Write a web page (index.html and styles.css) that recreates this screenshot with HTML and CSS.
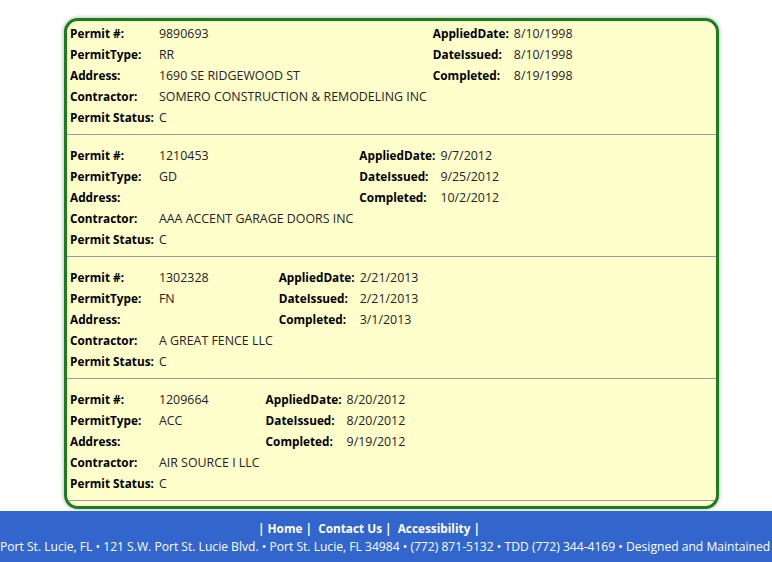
FILE: index.html
```html
<!DOCTYPE html>
<html>
<head>
<meta charset="utf-8">
<title>Permits</title>
<link rel="stylesheet" href="styles.css">
</head>
<body>
<div class="page">
  <div class="permits">
    <div class="record">
      <table class="rec">
        <tr><th>Permit #:</th><td>9890693</td><th>AppliedDate:</th><td>8/10/1998</td></tr>
        <tr><th>PermitType:</th><td>RR</td><th>DateIssued:</th><td>8/10/1998</td></tr>
        <tr><th>Address:</th><td>1690 SE RIDGEWOOD ST</td><th>Completed:</th><td>8/19/1998</td></tr>
        <tr><th>Contractor:</th><td>SOMERO CONSTRUCTION &amp; REMODELING INC</td><td></td><td></td></tr>
        <tr><th>Permit Status:</th><td>C</td><td></td><td></td></tr>
      </table>
    </div>
    <div class="record">
      <table class="rec">
        <tr><th>Permit #:</th><td>1210453</td><th>AppliedDate:</th><td>9/7/2012</td></tr>
        <tr><th>PermitType:</th><td>GD</td><th>DateIssued:</th><td>9/25/2012</td></tr>
        <tr><th>Address:</th><td></td><th>Completed:</th><td>10/2/2012</td></tr>
        <tr><th>Contractor:</th><td>AAA ACCENT GARAGE DOORS INC</td><td></td><td></td></tr>
        <tr><th>Permit Status:</th><td>C</td><td></td><td></td></tr>
      </table>
    </div>
    <div class="record">
      <table class="rec">
        <tr><th>Permit #:</th><td>1302328</td><th>AppliedDate:</th><td>2/21/2013</td></tr>
        <tr><th>PermitType:</th><td>FN</td><th>DateIssued:</th><td>2/21/2013</td></tr>
        <tr><th>Address:</th><td></td><th>Completed:</th><td>3/1/2013</td></tr>
        <tr><th>Contractor:</th><td>A GREAT FENCE LLC</td><td></td><td></td></tr>
        <tr><th>Permit Status:</th><td>C</td><td></td><td></td></tr>
      </table>
    </div>
    <div class="record">
      <table class="rec">
        <tr><th>Permit #:</th><td>1209664</td><th>AppliedDate:</th><td>8/20/2012</td></tr>
        <tr><th>PermitType:</th><td>ACC</td><th>DateIssued:</th><td>8/20/2012</td></tr>
        <tr><th>Address:</th><td></td><th>Completed:</th><td>9/19/2012</td></tr>
        <tr><th>Contractor:</th><td>AIR SOURCE I LLC</td><td></td><td></td></tr>
        <tr><th>Permit Status:</th><td>C</td><td></td><td></td></tr>
      </table>
    </div>
  </div>
</div>
<div class="footer">
  <div class="links">| <a href="#">Home</a> | &nbsp;<a href="#">Contact Us</a> | &nbsp;<a href="#">Accessibility</a> |</div>
  <div class="address">Port St. Lucie, FL • 121 S.W. Port St. Lucie Blvd. • Port St. Lucie, FL 34984 • (772) 871-5132 • TDD (772) 344-4169 • Designed and Maintained by the City of Port St. Lucie</div>
</div>
</body>
</html>
```
FILE: styles.css
```css
html, body {
  margin: 0;
  padding: 0;
  background: #ffffff;
  overflow: hidden;
}
body {
  font-family: "Open Sans", "Noto Sans", sans-serif;
  font-size: 12.4px;
  color: #222;
}
.page {
  padding: 18px 0 2px 64px;
}
.permits {
  width: 649px;
  background: #ffffcc;
  border: 3px solid #1b7d1b;
  border-radius: 14px;
  box-shadow: 0 0 4px rgba(0, 0, 0, 0.35);
  padding-top: 2px;
  overflow: hidden;
}
.record {
  padding-bottom: 6px;
  border-bottom: 1px solid #9a9a9a;
  margin-bottom: 10px;
}
.record:last-child {
  margin-bottom: 5px;
}
.rec {
  border-collapse: collapse;
}
.rec th, .rec td {
  height: 21px;
  padding: 0 3px;
  text-align: left;
  vertical-align: baseline;
  white-space: nowrap;
  line-height: 21px;
}
.rec th {
  font-weight: bold;
  font-size: 11.8px;
  color: #000;
  padding-right: 2px;
}
.footer {
  background: #3366cc;
  color: #fff;
  height: 51px;
  overflow: hidden;
}
.links {
  text-align: center;
  padding: 9px 34px 0 0;
  font-weight: bold;
  font-size: 11.8px;
  line-height: 17px;
}
.links a {
  color: #fff;
  text-decoration: none;
}
.address {
  white-space: nowrap;
  font-size: 12.1px;
  line-height: 19px;
}
```
